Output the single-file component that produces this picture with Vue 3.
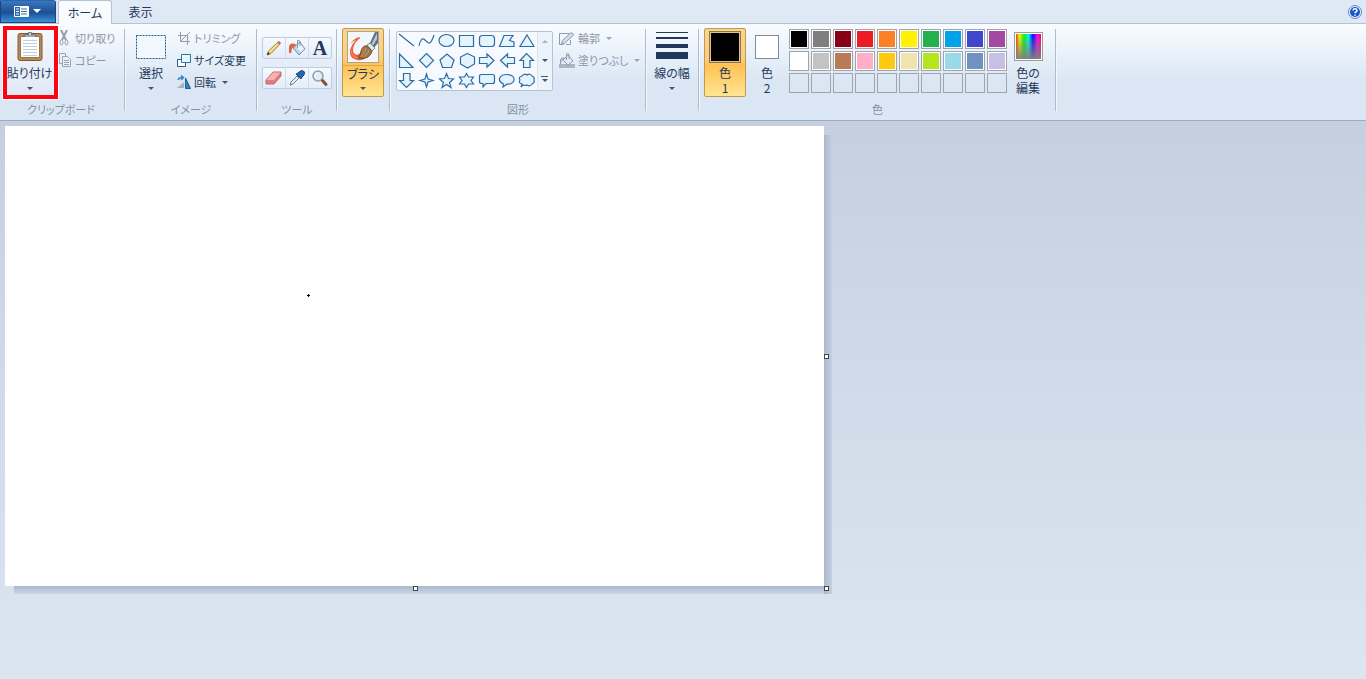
<script setup>
const shapes = [
  { name: '直線', d: 'M2 3L17 15' },
  { name: '曲線', d: 'M2 15C3 10 5 6 8 9S13 16 17 4' },
  { name: '楕円', d: 'M2 9.5a7.5 6 0 1 0 15 0a7.5 6 0 1 0-15 0z' },
  { name: '四角形', d: 'M2.5 4.5h14v11h-14z' },
  { name: '角丸四角形', d: 'M5.500 4.500h9q3 0 3 3v5q0 3-3 3h-9q-3 0-3-3v-5q0-3 3-3z' },
  { name: '多角形', d: 'M7 4.500h9L12.500 9.500L17 11v4.500H2.500z' },
  { name: '三角形', d: 'M10 4L17 15.500H3z' },
  { name: '直角三角形', d: 'M2.500 3V16.500H16z' },
  { name: 'ひし形', d: 'M9.500 2.500L16.500 9.500L9.500 16.500L2.500 9.500z' },
  { name: '五角形', d: 'M10 3L17 9L14.500 16.500H5.500L3 9z' },
  { name: '六角形', d: 'M10.500 2.500L17.500 6V13L10.500 17L3.500 13V6z' },
  { name: '右矢印', d: 'M2.500 6.500H10V3L17 9.500L10 16V12.500H2.500z' },
  { name: '左矢印', d: 'M17.500 6.500H10.500V3L3.500 9.500L10.500 16V12.500H17.500z' },
  { name: '上矢印', d: 'M6.500 16.500V9.500H3L9.500 2.500L16.500 9.500H13V16.500z' },
  { name: '下矢印', d: 'M6.500 2.500V9.500H2.500L9.500 16.500L16.500 9.500H13V2.500z' },
  { name: '4点星', d: 'M9.500 3L11 8L16 9.500L11 11L9.500 16L8 11L3 9.500L8 8z' },
  { name: '5点星', d: 'M9.500 2.500L11.500 7.500L16.500 8L12.500 11.500L14 16.500L9.500 13.500L5 16.500L6.500 11.500L2.500 8L7.500 7.500z' },
  { name: '6点星', d: 'M9.500 2.500L11.500 6H16.500L14 9.500L16.500 13H11.500L9.500 16.500L7.500 13H2.500L5 9.500L2.500 6H7.500z' },
  { name: '角丸吹き出し', d: 'M4.500 3.500h11q2 0 2 2v5q0 2-2 2H9L6 16V12.500H4.500q-2 0-2-2v-5q0-2 2-2z' },
  { name: '円形吹き出し', d: 'M6 16L6.500 13C-1 9 3 3.500 10 3.500C19 3.500 20 13 10 13.200z' },
  { name: '雲形吹き出し', d: 'M5 5Q7 2 10 4Q13 2 15 5Q18 6 17 9Q18 12 15 13Q13 16 10 14Q8 15 6 14L4 16L5 13Q1 12 3 9Q1 6 5 5z' }
]
const palette = [
  '#000000', '#7f7f7f', '#880015', '#ed1c24', '#ff7f27', '#fff200', '#22b14c', '#00a2e8', '#3f48cc', '#a349a4',
  '#ffffff', '#c3c3c3', '#b97a57', '#ffaec9', '#ffc90e', '#efe4b0', '#b5e61d', '#99d9ea', '#7092be', '#c8bfe7',
  '', '', '', '', '', '', '', '', '', ''
]
</script>

<template>
  <div class="app">
    <nav class="tabs">
      <button class="file" aria-label="ファイル">
        <svg width="28" height="14" viewBox="0 0 28 14">
          <path d="M.5 1.500h14v10H.5z" fill="#2c68ad" stroke="#fff" />
          <path d="M6 2h8v9H6z" fill="#fff" />
          <path d="M2 4h3M2 6.500h3M2 9h3" stroke="#fff" />
          <path d="M7 4h6M7 6.500h6M7 9h6" stroke="#376ca8" />
          <path d="M19 4h8l-4 4z" fill="#fff" />
        </svg>
      </button>
      <button class="tab active">ホーム</button>
      <button class="tab">表示</button>
      <button class="help" aria-label="ヘルプ">
        <svg width="14" height="14" viewBox="0 0 14 14">
          <circle cx="7" cy="7" r="6.500" fill="#e7f1fc" stroke="#6387bd" />
          <circle cx="7" cy="7" r="5" fill="#1c55c8" />
          <path d="M5 5.500Q5.200 3.800 7 3.800T9 5.400Q9 6.400 7.800 7Q7 7.400 7 8.300M7 9.400v1.400" fill="none" stroke="#fff" stroke-width="1.500" />
        </svg>
      </button>
    </nav>

    <header class="ribbon">
      <section class="group clipboard">
        <div class="body">
          <button class="big paste">
            <svg width="26" height="30" viewBox="0 0 26 30">
              <rect x="1" y="1.500" width="24" height="27" rx="2" fill="#b98a50" stroke="#86592c" />
              <path d="M3.500 4.500h19v21h-19z" fill="#fdfefe" stroke="#8d775f" />
              <path d="M6 8.500h14M6 11.500h14M6 14.500h14M6 17.500h14M6 20.500h14M6 23.500h14" stroke="#c3d0db" />
              <path d="M6 5Q7 2 10 2Q10 0 13 0T16 2Q19 2 20 5z" fill="#66717b" />
              <path d="M8 4h10" stroke="#dce2e7" />
              <circle cx="13" cy="2" r="1" fill="#e9edf0" />
            </svg>
            <span>貼り付け</span><i class="arrow"></i>
          </button>
          <div class="rows">
            <button class="row" disabled>
              <svg width="14" height="16" viewBox="0 0 14 16"><path d="M3 0l5 10M9 0L4 10" stroke="#95a0b0" stroke-width="2" /><ellipse cx="3.500" cy="12.500" rx="1.500" ry="2.500" fill="none" stroke="#95a0b0" /><ellipse cx="8.500" cy="12.500" rx="1.500" ry="2.500" fill="none" stroke="#95a0b0" /></svg>
              切り取り
            </button>
            <button class="row" disabled>
              <svg width="14" height="16" viewBox="0 0 14 16"><path d="M1.500 1.500h6v10h-6z" fill="#edf1f6" stroke="#99a3b2" /><path d="M4.500 4.500h5l3 3v7h-8z" fill="#edf1f6" stroke="#99a3b2" /><path d="M6 8.500h5M6 10.500h5M6 12.500h5" stroke="#99a3b2" /></svg>
              コピー
            </button>
          </div>
        </div>
        <h2>クリップボード</h2>
      </section>
      <i class="sep"></i>

      <section class="group image">
        <div class="body">
          <button class="big">
            <svg width="32" height="30" viewBox="0 0 32 30"><rect x="1.500" y="3.500" width="29" height="23" fill="#f1f8fd" stroke="#235d91" stroke-dasharray="2 1" /></svg>
            <span>選択</span><i class="arrow"></i>
          </button>
          <div class="rows">
            <button class="row" disabled>
              <svg width="14" height="14" viewBox="0 0 14 14"><path d="M3.500 1v9.500H13M1 4.500h9.500V14M4 10L13 1" fill="none" stroke="#929dad" /></svg>
              トリミング
            </button>
            <button class="row">
              <svg width="14" height="14" viewBox="0 0 14 14"><path d="M.5 6.500h8v7h-8z" fill="#fff" stroke="#235d91" /><path d="M4.500 1.500h9v8h-9z" fill="#eef8fd" stroke="#2675a7" /></svg>
              サイズ変更
            </button>
            <button class="row">
              <svg width="14" height="14" viewBox="0 0 14 14"><path d="M0 13h7V7z" fill="#a6b1bb" /><path d="M8.500 3v10.500h5z" fill="#2787b7" stroke="#235d91" /><path d="M1 5Q2 2 6 2.500M4 .5L6.500 2.500L4 5" fill="none" stroke="#3386ca" stroke-width="1.500" /></svg>
              回転<i class="arrow"></i>
            </button>
          </div>
        </div>
        <h2>イメージ</h2>
      </section>
      <i class="sep"></i>

      <section class="group tools">
        <div class="body">
          <div class="strip">
            <button aria-label="鉛筆"><svg width="18" height="18" viewBox="0 0 18 18"><path d="M2 16l1.500-4L12.500 3.500l2 2L6 14.500z" fill="#f5d568" stroke="#8b6b37" stroke-width=".8" /><path d="M5 12.500l8-8" stroke="#fff0a8" /><path d="M12 3.500L13.500 2q2 0 2.500 2.500L14.500 6z" fill="#d96570" /><path d="M2 16l1-3 2 2z" fill="#333" /></svg></button>
            <button aria-label="塗りつぶし"><svg width="18" height="18" viewBox="0 0 18 18"><path d="M5 9l7-6 5 7-6 6z" fill="#b5d8f0" stroke="#64829c" stroke-width=".8" /><path d="M8 8l4-4 4 6-3 3z" fill="#edf6fb" /><path d="M9.500 9V1.500q2-1.500 2.500 1.500v4" fill="none" stroke="#698097" stroke-width=".8" /><path d="M8 5Q1 3 1 8v5q1 3 2.500 0Q3 9 7 7z" fill="#db6742" /></svg></button>
            <button aria-label="テキスト" class="letter">A</button>
          </div>
          <div class="strip">
            <button aria-label="消しゴム"><svg width="18" height="18" viewBox="0 0 18 18"><path d="M1 11l7-8h8v4l-7 8H1z" fill="#dc7d83" stroke="#bf6870" /><path d="M1.500 11L8 3.500h7.500L9 11z" fill="#f8b1ae" /></svg></button>
            <button aria-label="色の選択"><svg width="18" height="18" viewBox="0 0 18 18"><path d="M2 16l1-3 6-6 2 2-6 6z" fill="#e3edf5" stroke="#617e96" /><path d="M8 5l5 5 1-2 2-2q1.500-3-.5-4t-4 .5L10 4z" fill="#2567ae" stroke="#1c477d" /></svg></button>
            <button aria-label="拡大鏡"><svg width="18" height="18" viewBox="0 0 18 18"><path d="M11 11l4 4.500" stroke="#815032" stroke-width="3" stroke-linecap="round" /><circle cx="7" cy="7" r="5" fill="#dceef8" stroke="#929ca4" stroke-width="1.500" /><path d="M4 7q0-3 3-3" stroke="#fff" fill="none" /></svg></button>
          </div>
        </div>
        <h2>ツール</h2>
      </section>
      <i class="sep"></i>

      <section class="group brushes">
        <button class="big brush selected">
          <svg width="32" height="32" viewBox="0 0 32 32">
            <rect x=".5" y=".5" width="31" height="31" fill="#f3f7fa" stroke="#b1a48d" />
            <path d="M3 13Q7 7 13 6Q14 7 12 8Q6 13 6 19Q6 23 10 24L15 21L20 26Q16 30 10 29Q2 27 3 20Q4 14 9 9Q6 10 3 13z" fill="#ee5f3c" />
            <path d="M4 20Q5 26 11 27" fill="none" stroke="#f6977c" />
            <path d="M22 14L28 1h3v11l-5 6z" fill="#5b718c" />
            <path d="M24 14L30 2v6l-5 8z" fill="#b9c9d8" />
            <path d="M20 14l3-2 5 5-3 3z" fill="#e5e7e7" stroke="#828985" />
            <path d="M11 27Q14 24 14 20Q16 14 20 15L25 20Q23 29 11 27z" fill="#a1764a" stroke="#71502f" />
            <path d="M14 26Q18 22 19 17M17 26Q21 23 22 19" fill="none" stroke="#c39b6b" />
          </svg>
          <span>ブラシ</span><i class="arrow"></i>
        </button>
      </section>
      <i class="sep"></i>

      <section class="group shapes">
        <div class="body">
          <div class="gallery">
            <div class="grid">
              <button v-for="s in shapes" :key="s.name" :aria-label="s.name">
                <svg width="20" height="20" viewBox="0 0 20 20"><path :d="s.d" :fill="s.d.endsWith('z') ? '#e5f4fb' : 'none'" stroke="#2a6da6" stroke-width="1.200" /></svg>
              </button>
            </div>
            <div class="scroll">
              <button aria-label="上へ" disabled><i class="arrow up"></i></button>
              <button aria-label="下へ"><i class="arrow"></i></button>
              <button aria-label="すべて表示"><i class="arrow more"></i></button>
            </div>
          </div>
          <div class="rows">
            <button class="row" disabled>
              <svg width="16" height="16" viewBox="0 0 16 16"><path d="M10 3.500H.5v11h4M11.500 10v4.500H7" fill="none" stroke="#8d9aaa" /><path d="M2.500 14l1-3.500L12 2.500l3 2-9 8.500z" fill="#d3dce7" stroke="#8f9caf" /></svg>
              輪郭<i class="arrow"></i>
            </button>
            <button class="row" disabled>
              <svg width="16" height="16" viewBox="0 0 16 16"><path d="M0 12h16v4H0z" fill="#aab5c5" /><path d="M1.500 12V8q1-3 4-2" fill="#b7c2d0" stroke="#8f9daf" /><path d="M4 8l5-5 5 6-5 4z" fill="#e3eaf2" stroke="#8f9daf" /><path d="M7.500 8V2q1.500-2 2.500 1v4" stroke="#8f9daf" fill="none" /></svg>
              塗りつぶし<i class="arrow"></i>
            </button>
          </div>
        </div>
        <h2>図形</h2>
      </section>
      <i class="sep"></i>

      <section class="group width">
        <button class="big">
          <svg width="32" height="30" viewBox="0 0 32 30"><path d="M0 0h32v1H0zM0 5h32v2H0zM0 12h32v4H0zM0 20h32v7H0z" fill="#1e395b" /></svg>
          <span>線の幅</span><i class="arrow"></i>
        </button>
      </section>
      <i class="sep"></i>

      <section class="group colors">
        <div class="body">
          <button class="big colour selected"><i class="current"></i><span>色<br>1</span></button>
          <button class="big colour second"><i class="current"></i><span>色<br>2</span></button>
          <div class="palette">
            <button v-for="(c, i) in palette" :key="i" :disabled="!c" :aria-label="c || '空き'"><i v-if="c" :style="{ background: c }"></i></button>
          </div>
          <button class="big edit"><i class="spectrum"></i><span>色の<br>編集</span></button>
        </div>
        <h2>色</h2>
      </section>
      <i class="sep"></i>
    </header>

    <main class="work">
      <div class="paper">
        <i class="dot"></i>
        <i class="handle right"></i>
        <i class="handle bottom"></i>
        <i class="handle corner"></i>
      </div>
    </main>
  </div>
</template>

<style>
body { margin: 0; }
</style>

<style scoped>
* { box-sizing: border-box; }
.app { display: flex; flex-direction: column; min-height: 100vh; font-family: "Noto Sans CJK JP", sans-serif; font-size: 12px; line-height: 15px; font-feature-settings: "palt"; color: #1e395b; }
button { border: 0; padding: 0; margin: 0; background: none; font: inherit; font-feature-settings: inherit; color: inherit; white-space: nowrap; }
svg, i { display: block; flex: none; }
.tabs { display: flex; height: 24px; background: #dfe9f5; border-bottom: 1px solid #b5c3d7; }
.file { display: flex; justify-content: center; align-items: center; width: 56px; height: 23px; border: 1px solid #1c4580; border-top-color: #2866ae; border-radius: 0 3px 0 0; background: linear-gradient(#3a78bf, #205397 50%, #164b92 51%, #3c91d7); }
.tab { width: 56px; height: 23px; padding-left: 1px; }
.tab.active { width: 54px; height: 24px; padding: 0; margin-left: 2px; border: 1px solid #b5c3d7; border-bottom: 0; border-radius: 3px 3px 0 0; background: #f9fcff; }
.help { margin-left: auto; margin-right: 4px; }
.ribbon { display: flex; height: 97px; border-bottom: 1px solid #9eacc3; background: linear-gradient(#f9fcff, #e7f0f9 35%, #dbe6f4 60%, #dce7f5); }
.group { display: flex; flex-direction: column; flex: none; padding: 4px 5px 0; }
.body { display: flex; height: 72px; }
h2 { margin: 1px 0 0; font-size: 11px; line-height: 16px; font-weight: 400; text-align: center; color: #8291a5; }
.sep { width: 2px; margin: 5px 0 9px; border-left: 1px solid #aebcd0; border-right: 1px solid #f3f8fd; }
.clipboard { width: 124px; padding-left: 3px; }
.image { width: 130px; }
.tools { width: 78px; padding: 4px 4px 0; }
.brushes { width: 51px; padding: 4px 4px 0; }
.shapes { width: 254px; }
.width { width: 51px; padding: 4px 2px 0; }
.colors { width: 355px; padding: 4px 4px 0; }
.big { display: flex; flex: none; flex-direction: column; align-items: center; padding-top: 4px; width: 42px; height: 69px; }
.big span { margin-top: 3px; }
.arrow { border: 3px solid transparent; border-top-color: #44566f; border-bottom: 0; }
.big .arrow { margin-top: 7px; }
.rows { display: flex; flex-direction: column; margin-top: -1px; }
.row { display: flex; align-items: center; gap: 3px; height: 22px; font-size: 11px; text-align: left; }
.row .arrow { margin-left: 3px; }
button:disabled { color: #8d97a5; }
button:disabled .arrow { border-top-color: #99a5b6; }
.paste { width: 55px; height: 73px; margin-top: -2px; border: 4px solid #fa0613; outline: 1px solid #fff; background: linear-gradient(#f4f9fe, #dfe8f5); padding: 2px 2px 0 0; }
.image .big { width: 40px; }
.image .rows { margin-left: 6px; }
.tools .body { flex-direction: column; gap: 8px; padding-top: 9px; }
.strip { display: flex; height: 22px; border: 1px solid #bfcde0; border-radius: 2px; background: linear-gradient(#f6fafe, #e4ecf7); }
.strip button { display: flex; flex: 1; align-items: center; justify-content: center; }
.strip button + button { border-left: 1px solid #d0dceb; }
.letter { font-family: "Liberation Serif", serif; font-size: 20px; font-weight: 700; }
.selected { border: 1px solid #c29b4a; border-radius: 2px; background: linear-gradient(#f8d593, #fbcd7d 45%, #ffc155 54%, #ffe591); }
.brush { padding-top: 2px; }
.brush span { width: 100%; border-top: 1px solid #dba94d; margin-top: 2px; }
.brush .arrow { margin-top: 6px; }
.gallery { display: flex; flex: none; width: 157px; height: 60px; margin-top: 3px; border: 1px solid #b5c3d7; border-radius: 2px; background: #f6f9fd; }
.grid { display: grid; flex: none; grid-template-columns: repeat(7, 20px); grid-template-rows: repeat(3, 20px); height: 58px; margin-top: -1px; }
.scroll { display: grid; flex: 1; grid-template-rows: repeat(3, 1fr); border-left: 1px solid #dce5f1; background: #edf3fa; }
.scroll button { display: flex; align-items: center; justify-content: center; }
.up { border-top: 0; border-bottom: 3px solid #aab5c4; }
.more { position: relative; }
.more::before { content: ""; position: absolute; top: -6px; left: -4px; width: 7px; height: 1px; background: #44566f; }
.shapes .rows { margin-left: 6px; }
.width .big { width: 46px; }
.colour { padding-top: 2px; }
.colour span { margin-top: 2px; }
.current { width: 32px; height: 32px; border: 1px solid #8b7445; outline: 1px solid #e3c38a; outline-offset: -2px; background: #000; }
.second { padding-top: 7px; }
.second .current { width: 24px; height: 24px; border-color: #818a98; outline: 0; background: #fff; }
.second span { margin-top: 6px; }
.palette { display: grid; flex: none; grid-template-columns: repeat(10, 20px); grid-template-rows: repeat(3, 20px); gap: 2px; margin: 1px 0 0 1px; }
.palette button { border: 1px solid #a0a4ad; }
.palette i { height: 18px; border: 1px solid #fff; }
.edit span { margin-top: 4px; }
.edit .spectrum { width: 29px; height: 29px; border: 1px solid #a09b96; outline: 1px solid #fff; outline-offset: -2px; background: linear-gradient(transparent, #808080), linear-gradient(90deg, red, yellow, lime, cyan, blue, magenta, red); }
.work { flex: 1; padding: 5px; background: linear-gradient(#c5cfdf, #dce6f2); }
.paper { position: relative; width: 819px; height: 460px; background: #fff; }
.paper::before, .paper::after { content: ""; position: absolute; }
.paper::before { left: 100%; top: 9px; bottom: -8px; width: 8px; background: linear-gradient(90deg, #a9b7cd, #c5d0e1); }
.paper::after { top: 100%; left: 9px; right: 0; height: 8px; background: linear-gradient(#a9b7cd, #cbd6e6); }
.handle { position: absolute; z-index: 1; width: 5px; height: 5px; border: 1px solid #444; background: #fff; }
.right { left: 819px; top: 228px; }
.bottom { left: 408px; top: 460px; }
.corner { left: 819px; top: 460px; }
.dot { position: absolute; left: 302px; top: 168px; width: 3px; height: 3px; background: linear-gradient(#000, #000) center / 3px 1px no-repeat, linear-gradient(#000, #000) center / 1px 3px no-repeat; }
</style>
